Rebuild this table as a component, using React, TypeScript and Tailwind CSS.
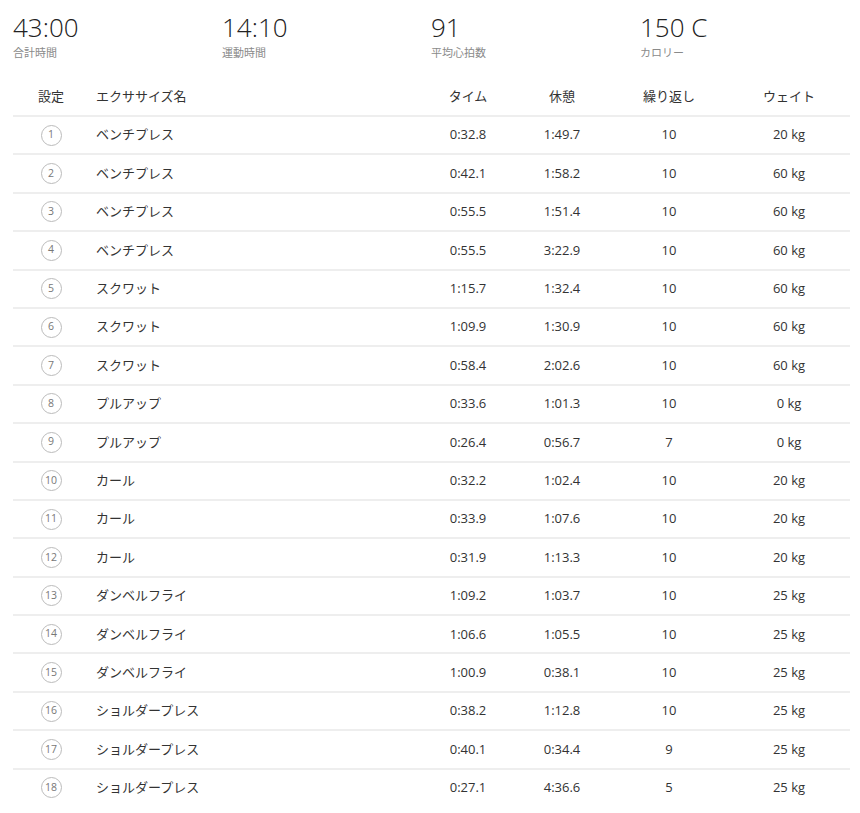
const stats = [
  { value: "43:00", label: "合計時間" },
  { value: "14:10", label: "運動時間" },
  { value: "91", label: "平均心拍数" },
  { value: "150 C", label: "カロリー" },
];

const rows = [
  ["ベンチプレス", "0:32.8", "1:49.7", "10", "20 kg"],
  ["ベンチプレス", "0:42.1", "1:58.2", "10", "60 kg"],
  ["ベンチプレス", "0:55.5", "1:51.4", "10", "60 kg"],
  ["ベンチプレス", "0:55.5", "3:22.9", "10", "60 kg"],
  ["スクワット", "1:15.7", "1:32.4", "10", "60 kg"],
  ["スクワット", "1:09.9", "1:30.9", "10", "60 kg"],
  ["スクワット", "0:58.4", "2:02.6", "10", "60 kg"],
  ["プルアップ", "0:33.6", "1:01.3", "10", "0 kg"],
  ["プルアップ", "0:26.4", "0:56.7", "7", "0 kg"],
  ["カール", "0:32.2", "1:02.4", "10", "20 kg"],
  ["カール", "0:33.9", "1:07.6", "10", "20 kg"],
  ["カール", "0:31.9", "1:13.3", "10", "20 kg"],
  ["ダンベルフライ", "1:09.2", "1:03.7", "10", "25 kg"],
  ["ダンベルフライ", "1:06.6", "1:05.5", "10", "25 kg"],
  ["ダンベルフライ", "1:00.9", "0:38.1", "10", "25 kg"],
  ["ショルダープレス", "0:38.2", "1:12.8", "10", "25 kg"],
  ["ショルダープレス", "0:40.1", "0:34.4", "9", "25 kg"],
  ["ショルダープレス", "0:27.1", "4:36.6", "5", "25 kg"],
];

const cols = "grid grid-cols-[76px_333px_92px_96px_118px_122px] items-center";

export default function App() {
  return (
    <div className="w-[860px] min-h-[813px] bg-white text-[#333] font-['Open_Sans','Noto_Sans_CJK_JP',sans-serif]">
      {/* summary */}
      <div className="grid grid-cols-4 w-[836px] ml-[13px] pt-[12px]">
        {stats.map((s) => (
          <div key={s.label}>
            <div className="text-[26px] leading-[30px] font-light text-[#222]">{s.value}</div>
            <div className="text-[11px] leading-[13px] mt-[4px] text-[#8a8a8a]">{s.label}</div>
          </div>
        ))}
      </div>

      {/* table */}
      <div className="w-[837px] ml-[13px] mt-[20px] text-[13px]">
        <div className={cols + " h-[36px]"}>
          <div className="text-center">設定</div>
          <div className="pl-[7px]">エクササイズ名</div>
          <div className="text-center">タイム</div>
          <div className="text-center">休憩</div>
          <div className="text-center">繰り返し</div>
          <div className="text-center">ウェイト</div>
        </div>
        {rows.map((r, i) => (
          <div key={i} className={cols + " h-[38.4px] border-t-2 border-[#eeeeee]"}>
            <div className="flex justify-center">
              <span className="w-[21px] h-[21px] rounded-full border border-[#bbbbbb] flex items-center justify-center text-[10.5px] text-[#777]">
                {i + 1}
              </span>
            </div>
            <div className="pl-[7px]">{r[0]}</div>
            <div className="text-center">{r[1]}</div>
            <div className="text-center">{r[2]}</div>
            <div className="text-center">{r[3]}</div>
            <div className="text-center">{r[4]}</div>
          </div>
        ))}
      </div>
    </div>
  );
}
